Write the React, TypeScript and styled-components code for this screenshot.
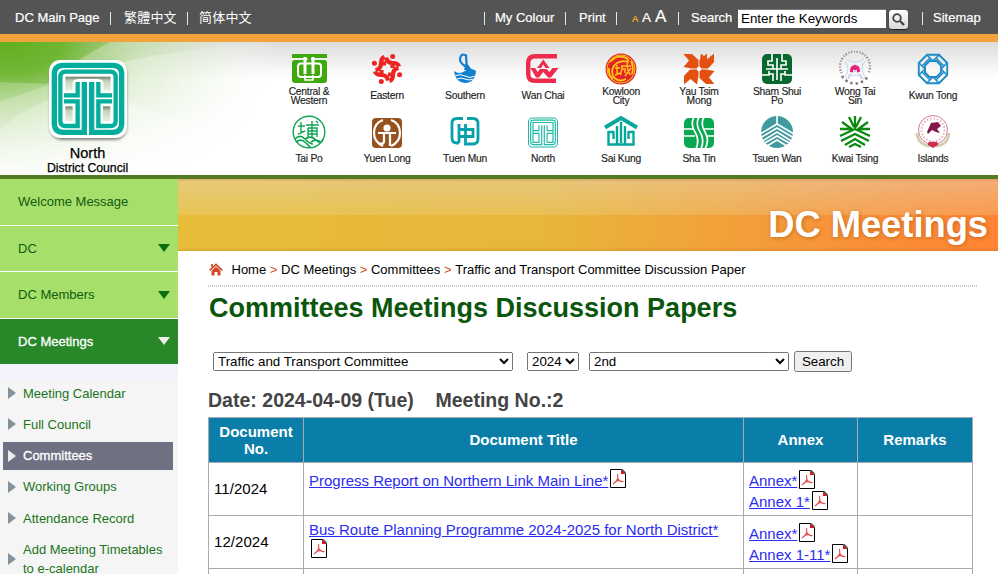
import React from "react";
import styled, { createGlobalStyle, css } from "styled-components";

const GlobalStyle = createGlobalStyle`
  * { box-sizing: border-box; }
  html, body { margin: 0; padding: 0; overflow: hidden; background: #fff; }
  body { font-family: "Liberation Sans", Arial, "Noto Sans CJK TC", sans-serif; font-size: 13px; color: #000; }
  a { color: inherit; text-decoration: none; }
`;

const Page = styled.div`
  width: 998px;
  height: 574px;
  overflow: hidden;
  display: flex;
  flex-direction: column;
`;

/* ---------- top bar ---------- */
const TopBar = styled.div`
  flex: none;
  height: 42px;
  background: #545454;
  border-bottom: 8px solid #f0a33c;
  color: #fff;
  display: grid;
  grid-template-columns: 95px 14px 63px 12px 285px 11px 70px 14px 37px 16px 10px 13px 23px 13px 47px 151px 33px 11px 1fr;
  padding-left: 15px;
  align-items: center;
  line-height: 34px;
  white-space: nowrap;
`;
const TopLink = styled.a<{ $lang?: string }>`
  font-size: 13px;
  -webkit-text-stroke: 0.2px #fff;
  ${(p) =>
    p.$lang &&
    css`
      font-family: "Noto Sans CJK ${p.$lang}", sans-serif;
      letter-spacing: 0.2px;
      padding-bottom: 2px;
      -webkit-text-stroke: 0;
    `}
`;
const Bar = styled.span`
  width: 1px;
  height: 13px;
  background: #dbe9f0;
`;
const SizeLetter = styled.a<{ $size: number; $active?: boolean }>`
  font-size: ${(p) => p.$size}px;
  color: ${(p) => (p.$active ? "#f7b718" : "#fff")};
  -webkit-text-stroke: 0.2px currentColor;
  line-height: 20px;
  align-self: start;
  height: 34px;
  display: flex;
  align-items: baseline;
  padding-top: 7px;
  &::before { content: ""; height: 15px; display: inline-block; }
`;
const Keywords = styled.input`
  width: 148px;
  height: 19px;
  border: 0;
  border-top: 1px solid #777;
  padding: 0 3px 2px;
  margin-top: 1px;
  background: #fff;
  font: 13.333px "Liberation Sans", Arial, sans-serif;
  color: #000;
  outline: 0;
`;
const GoButton = styled.button`
  width: 19px;
  height: 19px;
  margin-top: 3px;
  padding: 0;
  border: 0;
  border-radius: 3px;
  background: linear-gradient(#fff, #d8d8d8);
  box-shadow: 0 1px 1px #222;
  display: grid;
  place-items: center;
`;

/* ---------- header ---------- */
const Header = styled.header`
  flex: none;
  height: 137px;
  border-bottom: 4px solid #527b24;
  background:
    linear-gradient(rgba(120, 120, 120, 0.26), rgba(160, 160, 160, 0) 36px),
    #fff;
  display: flex;
  position: relative;
`;
const HeaderGlow = styled.svg`
  position: absolute;
  left: 0;
  top: 0;
`;
const Council = styled.div`
  position: relative;
  width: 270px;
  padding: 17px 0 0 47px;
`;
const CouncilName = styled.div`
  width: 81px;
  margin-top: 3px;
  display: flex;
  flex-direction: column;
  align-items: center;
  font-size: 14.5px;
  line-height: 15px;
  white-space: nowrap;
  -webkit-text-stroke: 0.25px #000;
`;
const CouncilSub = styled.div`
  font-size: 12.3px;
  letter-spacing: -0.05px;
`;
const Districts = styled.nav`
  position: relative;
  display: grid;
  grid-template-columns: repeat(9, 78px);
  grid-template-rows: 63px 62px;
  padding-top: 9px;
`;
const District = styled.a`
  display: flex;
  flex-direction: column;
  align-items: center;
  text-align: center;
  color: #222;
  font-size: 10.3px;
  letter-spacing: -0.25px;
  line-height: 9px;
  -webkit-text-stroke: 0.15px #222;
`;
const DistrictLabel = styled.span<{ $single?: boolean }>`
  margin-top: ${(p) => (p.$single ? 4 : 0)}px;
  white-space: pre;
`;

/* ---------- body ---------- */
const Body = styled.div`
  flex: 1;
  display: flex;
  min-height: 0;
`;
const Side = styled.aside`
  flex: none;
  width: 178px;
  background: linear-gradient(#f3f4fb 0, #f3f4fb 198px, #f5f5f5 204px);
  overflow: hidden;
`;
const MenuItem = styled.a<{ $height: number; $active?: boolean }>`
  display: flex;
  align-items: center;
  justify-content: space-between;
  height: ${(p) => p.$height}px;
  padding: 0 8px 1px 18px;
  border-bottom: ${(p) => (p.$active ? 0 : 1)}px solid #fff;
  background: ${(p) => (p.$active ? "#288728" : "#a6df69")};
  color: ${(p) => (p.$active ? "#fff" : "#125c12")};
  -webkit-text-stroke: ${(p) => (p.$active ? "0.3px #fff" : "0")};
`;
const SubMenu = styled.div`
  padding-top: 15px;
`;
const SubItem = styled.a<{ $active?: boolean; $tall?: boolean }>`
  display: flex;
  align-items: center;
  gap: 7px;
  width: 170px;
  height: ${(p) => (p.$tall ? 47 : 28)}px;
  margin: 0 0 3.25px 3px;
  padding-left: 5px;
  line-height: 19px;
  background: ${(p) => (p.$active ? "#707083" : "transparent")};
  color: ${(p) => (p.$active ? "#fff" : "#1a741a")};
  -webkit-text-stroke: ${(p) => (p.$active ? "0.3px #fff" : "0")};
`;
const Main = styled.main`
  flex: 1;
  display: flex;
  flex-direction: column;
`;
const Banner = styled.div`
  flex: none;
  height: 72px;
  display: flex;
  justify-content: flex-end;
  align-items: center;
  padding: 20px 10px 0 0;
  background:
    linear-gradient(rgba(180, 90, 50, 0.25), transparent 3px),
    linear-gradient(transparent 68px, rgba(160, 90, 20, 0.2)),
    linear-gradient(rgba(230, 215, 185, 0.5), rgba(235, 220, 160, 0.25) 36px, transparent 36px),
    linear-gradient(90deg, #e7bd3a, #e8b63a 45%, #f7953a 78%, #ff8434);
  color: #fff;
  font-size: 36.3px;
  font-weight: bold;
  text-shadow: 1px 1px 4px rgba(120, 60, 0, 0.4);
`;
const Content = styled.div`
  padding-left: 30px;
`;
const Crumbs = styled.div`
  width: 770px;
  height: 36px;
  display: flex;
  align-items: center;
  white-space: pre;
  background: repeating-linear-gradient(90deg, #ccc 0 1px, transparent 1px 2px) left bottom / 100% 2px no-repeat;
`;
const CrumbSep = styled.span`
  color: #d04a22;
`;
const HomeMark = styled.svg`
  margin: 0 8.5px 0 1px;
`;
const Title = styled.h1`
  margin: 4px 0 0 1px;
  font-size: 27px;
  line-height: 34px;
  color: #0a560a;
`;
const Filters = styled.form`
  display: flex;
  align-items: center;
  height: 21px;
  margin: 26px 0 0 5px;
`;
const Select = styled.select<{ $w: number; $gap: number }>`
  width: ${(p) => p.$w}px;
  height: 19px;
  margin: 0 ${(p) => p.$gap}px 0 0;
  font: 13.333px "Liberation Sans", Arial, sans-serif;
`;
const Submit = styled.button`
  width: 58px;
  height: 21px;
  padding: 0;
  font: 13.333px "Liberation Sans", Arial, sans-serif;
`;
const Meeting = styled.h2`
  display: flex;
  gap: 21.5px;
  margin: 16px 0 0;
  font-size: 19.55px;
  line-height: 24px;
  color: #444;
`;
const Table = styled.table`
  width: 765px;
  margin-top: 5px;
  table-layout: fixed;
  border-collapse: collapse;
  font-size: 15px;
`;
const Th = styled.th<{ $w: number }>`
  width: ${(p) => p.$w}px;
  height: 45px;
  padding: 0 5px 1px;
  border: 1px solid #aaa;
  background: #0a7ea8;
  color: #fff;
  line-height: 17px;
`;
const Td = styled.td<{ $top?: boolean }>`
  height: 53px;
  padding: 5px 0 4px 5px;
  border: 1px solid #aaa;
  vertical-align: ${(p) => (p.$top ? "top" : "middle")};
  line-height: 21px;
  white-space: nowrap;
`;
const DocNo = styled.div`
  padding-bottom: 2px;
  letter-spacing: 0.05px;
`;
const FileLine = styled.div<{ $plain?: boolean }>`
  display: flex;
  align-items: center;
  height: ${(p) => (p.$plain ? 17 : 21)}px;
  gap: 2px;
`;
const FileLink = styled.a<{ $plain?: boolean }>`
  color: #2c2cf0;
  text-decoration: underline;
  padding: ${(p) => (p.$plain ? "0 0 1px" : "3px 0 0")};
`;
const IconLine = styled.div`
  height: 21px;
  padding: 1px 0 0 2px;
  display: flex;
`;

const Triangle = ({ down, color }: { down?: boolean; color: string }) => (
  <svg width={down ? 12 : 8} height={down ? 8 : 12}>
    <path d={down ? "M0 0H12L6 8Z" : "M0 0L8 6L0 12Z"} fill={color} />
  </svg>
);

const Pdf = () => (
  <svg width="16" height="19" viewBox="0 0 16 19">
    <path d="M.5.5H11L15.5 5V18.5H.5Z" fill="#fff" stroke="#000" />
    <path d="M11 0H12.5L16 3.5V5H11Z" fill="#555" />
    <path d="M11 1L15 5H11Z" fill="#e11" />
    <path d="M8 5C6.5 6 8.5 8 7.7 9.5C6.8 12 4.5 14 3 15M7.8 9.5C9 12 11 13 13.5 12.5M5 13Q8 11 11 12" fill="none" stroke="#e34f4f" strokeWidth="1.2" />
  </svg>
);

const NorthStrokes = ({ color }: { color: string }) => (
  <g fill="none" stroke={color}>
    <path strokeWidth="16" d="M253 246V397H190Q163 397 163 370V223Q163 196 190 196H338Q365 196 365 223V370Q365 397 338 397H275V246" />
    <path strokeWidth="13" d="M192 304H233V378H197Q181 378 181 362V231Q181 215 197 215H331Q347 215 347 231V362Q347 378 331 378H295V304H336" />
    <path strokeWidth="13" d="M192 286H233V246M336 286H295V246" />
  </g>
);

const BigLogo = () => (
  <svg width="82" height="84" viewBox="141 177 246 252" style={{ display: "block" }}>
    <defs>
      <linearGradient id="hole" x1="0" y1="0" x2="0" y2="1">
        <stop offset="0" stopColor="#6f7e6c" />
        <stop offset=".3" stopColor="#c4d4ba" />
        <stop offset="1" stopColor="#e8f1e2" />
      </linearGradient>
      <filter id="soft" x="-20%" y="-20%" width="140%" height="140%">
        <feGaussianBlur stdDeviation="5" />
      </filter>
    </defs>
    <rect x="150" y="186" width="230" height="233" rx="36" fill="#222" opacity=".6" filter="url(#soft)" />
    <rect x="147" y="180" width="234" height="234" rx="34" fill="#fff" />
    <rect x="196" y="230" width="136" height="42" fill="url(#hole)" />
    <path d="M218 276V249Q218 239 234 237H294Q310 239 310 249V276Z" fill="#fff" />
    <rect x="196" y="319" width="22" height="45" fill="url(#hole)" />
    <rect x="309" y="319" width="22" height="45" fill="url(#hole)" />
    <NorthStrokes color="#05ae9c" />
  </svg>
);

const pinwheel = [0, 90, 180, 270];

const logos: Record<string, React.ReactNode> = {
  central: (
    <>
      <path d="M1 3H36V7H1Z" fill="#3fa80d" />
      <rect x="1" y="9" width="35" height="23" rx="3" fill="#3fa80d" />
      <path d="M14 6V23M22 6V23" stroke="#fff" strokeWidth="3" />
      <path d="M16.5 6H20V25H16.5Z" fill="#3fa80d" />
      <rect x="7" y="12.5" width="23" height="13.5" rx="3" fill="none" stroke="#fff" strokeWidth="2" />
      <path d="M14 24V29H22V24" stroke="#fff" fill="none" strokeWidth="1.6" />
    </>
  ),
  eastern: (
    <g fill="none" stroke="#ed2420" strokeWidth="4.2">
      {pinwheel.map((r) => (
        <g key={r} transform={`rotate(${r} 18 18)`}>
          <circle cx="23.7" cy="5.4" r="2.5" fill="#ed2420" stroke="none" />
          <path d="M17 6.5Q18 12 23.5 12T30 15.5M23.5 11V17" />
        </g>
      ))}
    </g>
  ),
  southern: (
    <>
      <path d="M7 20Q12 24 18 20Q24 16 29 20Q28 32 18 32Q8 31 7 20Z" fill="#1380cf" />
      <path d="M20 5Q14 1 13 8Q13 12 18 15Q24 19 18 22M19 4L20 20" fill="none" stroke="#1380cf" strokeWidth="2.2" />
      <path d="M19 11L25 19H17Z" fill="#1380cf" />
      <path d="M8 25Q13 22 18 25T28 25M10 28Q14 26 18 28T26 28" fill="none" stroke="#fff" strokeWidth="1" />
    </>
  ),
  wanchai: (
    <>
      <path d="M32 5.2H10Q3.2 5.2 3.2 12V23Q3.2 29.8 10 29.8H31" fill="none" stroke="#ef2b4d" strokeWidth="4.4" />
      <path d="M18.3 8.5L24.5 17H20.5L18.3 13.5L16 17H12Z" fill="#ef2b4d" />
      <path d="M5.5 17H10L12.8 21L15 18H21.5L24.5 21L27.5 17H33.5L26 26.5H23L18.3 21L14 26.5H11Z" fill="#ef2b4d" />
    </>
  ),
  kowloon: (
    <>
      <circle cx="18" cy="18" r="15.5" fill="#e1252b" />
      <g fill="none" stroke="#ffc914" strokeWidth="1.8">
        <circle cx="18" cy="18" r="14" strokeWidth="1" />
        <path d="M7 11Q13 4 20 6Q26 7 25 11Q20 9 14 12Q7 17 10 25Q15 32 23 28M6 17Q5 24 10 28M28 10Q31 16 29 23" />
        <path d="M14 14V23M12 17H17M12 24L17 22M18 15H28M19 15Q19 21 17 24M19 18H22V22M24 12Q24 21 28 24M28 17L22 25" strokeWidth="1.4" />
      </g>
    </>
  ),
  yautsim: (
    <>
      {pinwheel.map((r) => (
        <path key={r} transform={`rotate(${r} 18 18)`} d="M17.5 17.5V9L11 3H2.5L8 9.5L2.5 16L11 17.5Z" fill="#e35112" />
      ))}
      <path d="M18.5 9L26 2.5V10L19 16Z" fill="#e35112" />
      <circle cx="18" cy="18" r="2.2" fill="#fff" />
    </>
  ),
  sham: (
    <>
      <rect x="3" y="3" width="30" height="30" rx="5" fill="#08692e" />
      <path d="M18 7V29M7 18H29M13 3V10H9V14H14V18M23 3V10H27V14H22V18M3 24H10V20M33 24H26V20M14 30V23H10M22 30V23H26" fill="none" stroke="#fff" strokeWidth="1.6" />
    </>
  ),
  wongtai: (
    <>
      <path d="M4.5 22A15 15 0 1 1 31.5 22" fill="none" stroke="#a89aa2" strokeWidth="2.4" strokeDasharray="1.2 1.2 1.8 1.6" />
      <path d="M5 25A15 15 0 0 0 31 25" fill="none" stroke="#85777b" strokeWidth="2.6" strokeDasharray="2.4 3" />
      <g fill="none" stroke="#b8d8ee" strokeWidth="1">
        <path d="M9 8Q18 14 27 8M9 28Q18 20 27 28M8 10Q14 18 8 26M28 10Q22 18 28 26" />
        <path d="M12 24L18 20L24 24V28M18 20V13M12 24V28" stroke="#d9b5d8" />
      </g>
      <path d="M13 20Q13 14 18 14Q23 14 23 20V21H20V19H16V21H13Z" fill="#e4267c" />
    </>
  ),
  kwuntong: (
    <g fill="none" stroke="#218bc8" strokeWidth="1.9">
      <path d="M12 3.8H24L32.2 12V24L24 32.2H12L3.8 24V12Z" />
      <path d="M14.5 10H21.5L26 14.5V21.5L21.5 26H14.5L10 21.5V14.5Z" />
      <path d="M12 4L18 10L24 4M4 12L10 18L4 24M32 12L26 18L32 24M12 32L18 26L24 32M7 15L15 7M29 15L21 7M7 21L15 29M29 21L21 29" strokeWidth="1.6" />
    </g>
  ),
  taipo: (
    <g fill="none" stroke="#11a454" strokeWidth="1.4">
      <circle cx="18" cy="18" r="15.8" />
      <path d="M10 8V19M7 12H14M7 20L14 17M15 11H28M21 7V24M17 14H26V23M17 14V24M17 17H26M17 20H26M25 7L27 9" strokeWidth="1.4" />
      <path d="M4 25Q9 20 14 25T22 30M5 28Q10 24 15 29T19 33M14 25Q20 21 25 26T32 25M20 28Q26 24 30 29" strokeWidth="1.7" />
    </g>
  ),
  yuenlong: (
    <>
      <rect x="3" y="4" width="30" height="30" rx="4" fill="#96531f" />
      <g fill="none" stroke="#fff" strokeWidth="2.2">
        <path d="M14 6Q5 9 5 19Q5 28 14 32M22 6Q31 9 31 19Q31 28 22 32" />
        <path d="M9 19H27M15 19V27Q15 31 11 29M21 19V32" />
      </g>
      <circle cx="18" cy="14" r="3.6" fill="#fff" />
    </>
  ),
  tuenmun: (
    <path
      d="M16 4.5H10Q5 4.5 5 9.5V24Q5 29 10 29H12M20 4.5H26Q31 4.5 31 9.5V25Q31 30 26 30H18.5V10M12 29V10M11 15.5H26V22.5H11"
      fill="none"
      stroke="#07a1ab"
      strokeWidth="2.8"
    />
  ),
  north: (
    <svg x="3" y="3" width="30" height="31" viewBox="147 180 234 234">
      <rect x="151" y="184" width="226" height="226" rx="30" fill="none" stroke="#20b8a6" strokeWidth="8" />
      <g fill="none" stroke="#20b8a6" strokeWidth="9">
        <path d="M254 240V392H190Q168 392 168 370V223Q168 201 190 201H338Q360 201 360 223V370Q360 392 338 392H274V240" />
        <path d="M186 304H232V374H186V219H342V374H296V304H342M186 282H232V240M342 282H296V240" />
      </g>
    </svg>
  ),
  saikung: (
    <g fill="none" stroke="#07a79c">
      <path d="M2 13.5L18 4L34 13.5" strokeWidth="3.8" />
      <path d="M11.5 18H5.5V30.5H30.5V18H24.5M10.5 18V25M25.5 18V25M18 8V29M14 12V30M22 12V30" strokeWidth="2.4" />
    </g>
  ),
  shatin: (
    <>
      <rect x="3" y="4" width="30" height="30" rx="5" fill="#08a850" />
      <path d="M13 3Q9 10 14 18T15 35M18 3Q14 10 19 18T20 35M23 3Q19 10 24 18T24 35M3 15H12M3 22H14M22 15H34M25 22H34" fill="none" stroke="#fff" strokeWidth="1.7" />
    </>
  ),
  tsuenwan: (
    <>
      <circle cx="18" cy="18" r="16" fill="#409a9e" />
      <path d="M18 1V10L1 20M18 10L35 20M1 24L18 14L35 24M2 28L18 18L34 28M4 30L18 22L32 30M8 32L18 26L28 32" fill="none" stroke="#fff" strokeWidth="1.6" />
    </>
  ),
  kwaitsing: (
    <path
      d="M18 2V15M12 3L17 13M24 3L19 13M5 8L16 16M31 8L20 16M3 15H14M33 15H22M3 22L18 15L33 22M4 27L18 20L32 27M8 31L18 25L28 31M12 33L18 30L24 33"
      fill="none"
      stroke="#098a0d"
      strokeWidth="2.3"
    />
  ),
  islands: (
    <>
      <circle cx="18" cy="16" r="14.5" fill="none" stroke="#d27d99" strokeWidth="1" />
      <circle cx="18" cy="16" r="11.5" fill="none" stroke="#e2a9ba" strokeWidth="2" strokeDasharray="1.4 2" />
      <path d="M2 19Q3 31 15 32M34 19Q33 31 21 32" fill="none" stroke="#d5cdb0" strokeWidth="3" />
      <path d="M12 18L16 9L23 8L26 12L22 15L25 19L21 18L17 16L13 20Z" fill="#86164a" />
      <path d="M13 31Q12 27 18 28Q24 27 23 31L18 34Z" fill="#cb3050" />
    </>
  ),
};

const districts: [string, string][] = [
  ["central", "Central &\nWestern"], ["eastern", "Eastern"], ["southern", "Southern"],
  ["wanchai", "Wan Chai"], ["kowloon", "Kowloon\nCity"], ["yautsim", "Yau Tsim\nMong"],
  ["sham", "Sham Shui\nPo"], ["wongtai", "Wong Tai\nSin"], ["kwuntong", "Kwun Tong"],
  ["taipo", "Tai Po"], ["yuenlong", "Yuen Long"], ["tuenmun", "Tuen Mun"],
  ["north", "North"], ["saikung", "Sai Kung"], ["shatin", "Sha Tin"],
  ["tsuenwan", "Tsuen Wan"], ["kwaitsing", "Kwai Tsing"], ["islands", "Islands"],
];

const subItems = ["Meeting Calendar", "Full Council", "Committees", "Working Groups", "Attendance Record"];

export default function App() {
  return (
    <>
      <GlobalStyle />
      <Page>
        <TopBar>
          <TopLink>DC Main Page</TopLink>
          <Bar />
          <TopLink $lang="TC">繁體中文</TopLink>
          <Bar />
          <TopLink $lang="SC">简体中文</TopLink>
          <Bar />
          <TopLink>My Colour</TopLink>
          <Bar />
          <TopLink>Print</TopLink>
          <Bar />
          <SizeLetter $size={9.5} $active>A</SizeLetter>
          <SizeLetter $size={13.5}>A</SizeLetter>
          <SizeLetter $size={17}>A</SizeLetter>
          <Bar />
          <TopLink>Search</TopLink>
          <Keywords defaultValue="Enter the Keywords" />
          <GoButton type="button">
            <svg width="15" height="15" viewBox="0 0 15 15" fill="none" stroke="#444">
              <circle cx="6" cy="6" r="3.8" strokeWidth="1.8" />
              <path d="M9 9L13 13" strokeWidth="2.4" />
            </svg>
          </GoButton>
          <Bar />
          <TopLink>Sitemap</TopLink>
        </TopBar>

        <Header>
          <HeaderGlow width="300" height="133">
            <defs>
              <radialGradient id="glow" gradientUnits="userSpaceOnUse" cx="0" cy="0" r="1" gradientTransform="matrix(270 0 0 160 10 0)">
                <stop offset="0" stopColor="#62b01e" />
                <stop offset=".2" stopColor="#6ab42c" stopOpacity=".95" />
                <stop offset=".5" stopColor="#93c565" stopOpacity=".55" />
                <stop offset="1" stopColor="#fff" stopOpacity="0" />
              </radialGradient>
              <linearGradient id="ray" gradientUnits="userSpaceOnUse" x1="0" y1="0" x2="280" y2="0">
                <stop offset="0" stopColor="#fff" stopOpacity=".2" />
                <stop offset=".5" stopColor="#fff" stopOpacity=".3" />
                <stop offset="1" stopColor="#fff" stopOpacity="0" />
              </linearGradient>
            </defs>
            <rect width="300" height="133" fill="url(#glow)" />
            <path d="M110 0Q75 18 46 42L0 40V133H300V0Z" fill="url(#ray)" />
            <path d="M0 60Q60 38 130 18Q200 4 290 0V133H0Z" fill="url(#ray)" />
            <path d="M0 88Q35 55 85 50Q180 70 258 120V133H0Z" fill="url(#ray)" />
          </HeaderGlow>
          <Council>
            <BigLogo />
            <CouncilName>
              North
              <CouncilSub>District Council</CouncilSub>
            </CouncilName>
          </Council>
          <Districts>
            {districts.map(([id, label]) => (
              <District key={id}>
                <svg width="36" height="36" viewBox="0 0 36 36">{logos[id]}</svg>
                <DistrictLabel $single={!label.includes("\n")}>{label}</DistrictLabel>
              </District>
            ))}
          </Districts>
        </Header>

        <Body>
          <Side>
            <MenuItem $height={47}>Welcome Message</MenuItem>
            <MenuItem $height={46}>DC <Triangle down color="#0b6e13" /></MenuItem>
            <MenuItem $height={47}>DC Members <Triangle down color="#0b6e13" /></MenuItem>
            <MenuItem $height={45} $active>DC Meetings <Triangle down color="#eee" /></MenuItem>
            <SubMenu>
              {subItems.map((s) => (
                <SubItem key={s} $active={s === "Committees"}>
                  <Triangle color={s === "Committees" ? "#eee" : "#84939b"} />
                  {s}
                </SubItem>
              ))}
              <SubItem $tall>
                <Triangle color="#84939b" />
                <span>Add Meeting Timetables<br />to e-calendar</span>
              </SubItem>
            </SubMenu>
          </Side>
          <Main>
            <Banner>DC Meetings</Banner>
            <Content>
              <Crumbs>
                <HomeMark width="14" height="13" viewBox="0 0 14 13">
                  <path d="M2.5 8V12.5H5.5V9H8.5V12.5H11.5V7L7 3Z" fill="#cf4b27" />
                  <path d="M.7 7.4L7 1.4L13.3 7.4M3 1V4" fill="none" stroke="#cf4b27" strokeWidth="1.7" />
                  <path d="M2 8L7 3.3L12 8" fill="none" stroke="#fff" strokeWidth=".6" />
                </HomeMark>
                Home<CrumbSep> &gt; </CrumbSep>DC Meetings<CrumbSep> &gt; </CrumbSep>Committees<CrumbSep> &gt; </CrumbSep>Traffic and Transport Committee Discussion Paper
              </Crumbs>
              <Title>Committees Meetings Discussion Papers</Title>
              <Filters>
                <Select $w={300} $gap={14}><option>Traffic and Transport Committee</option></Select>
                <Select $w={52} $gap={10}><option>2024</option></Select>
                <Select $w={200} $gap={5}><option>2nd</option></Select>
                <Submit type="button">Search</Submit>
              </Filters>
              <Meeting><span>Date: 2024-04-09 (Tue)</span><span>Meeting No.:2</span></Meeting>
              <Table>
                <thead>
                  <tr>
                    <Th $w={95}>Document No.</Th>
                    <Th $w={440}>Document Title</Th>
                    <Th $w={114}>Annex</Th>
                    <Th $w={115}>Remarks</Th>
                  </tr>
                </thead>
                <tbody>
                  <tr>
                    <Td><DocNo>11/2024</DocNo></Td>
                    <Td $top>
                      <FileLine><FileLink>Progress Report on Northern Link Main Line*</FileLink><Pdf /></FileLine>
                    </Td>
                    <Td>
                      <FileLine><FileLink>Annex*</FileLink><Pdf /></FileLine>
                      <FileLine><FileLink>Annex 1*</FileLink><Pdf /></FileLine>
                    </Td>
                    <Td />
                  </tr>
                  <tr>
                    <Td><DocNo>12/2024</DocNo></Td>
                    <Td $top>
                      <FileLine $plain><FileLink $plain>Bus Route Planning Programme 2024-2025 for North District*</FileLink></FileLine>
                      <IconLine><Pdf /></IconLine>
                    </Td>
                    <Td>
                      <FileLine><FileLink>Annex*</FileLink><Pdf /></FileLine>
                      <FileLine><FileLink>Annex 1-11*</FileLink><Pdf /></FileLine>
                    </Td>
                    <Td />
                  </tr>
                  <tr><Td /><Td /><Td /><Td /></tr>
                </tbody>
              </Table>
            </Content>
          </Main>
        </Body>
      </Page>
    </>
  );
}
